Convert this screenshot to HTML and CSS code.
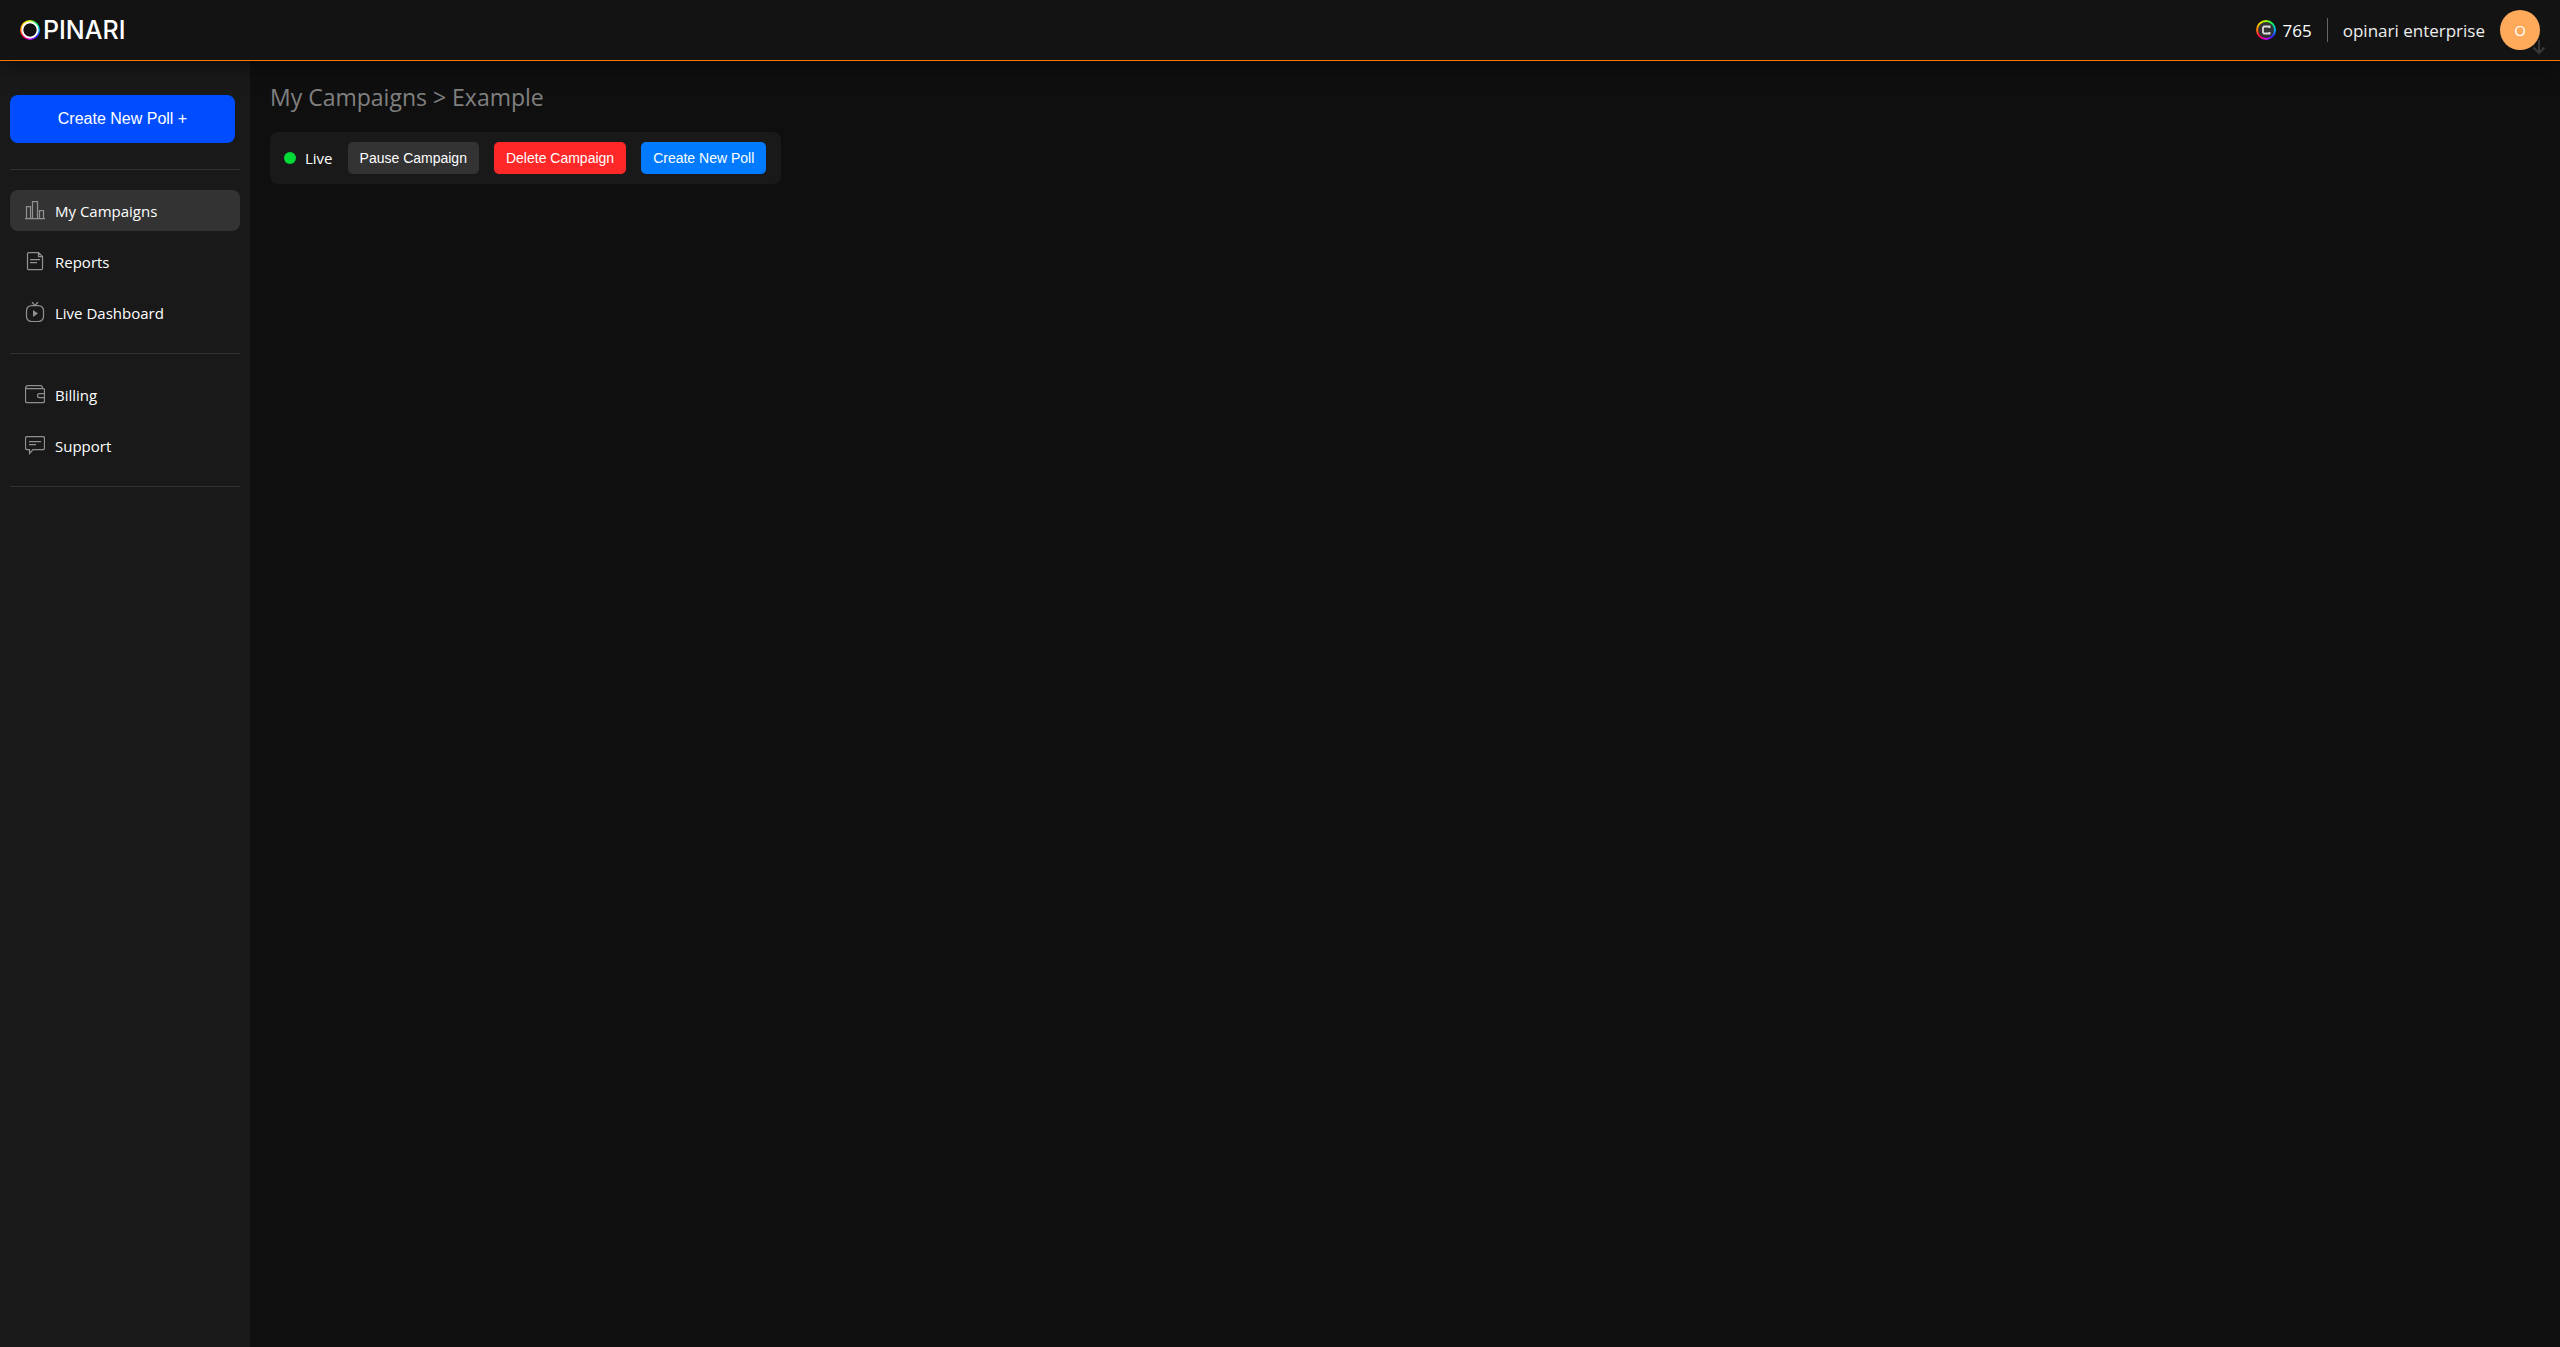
FILE: index.html
```html
<!DOCTYPE html>
<html lang="en">
<head>
    <meta charset="UTF-8">
    <meta name="viewport" content="width=device-width, initial-scale=1.0">
    <title>Opinari</title>
    <link rel="stylesheet" href="styles.css">
</head>
<body>
    <header class="header">
        <a class="logo" href="#" aria-label="Opinari"><span class="logo-ring"></span><span>PINARI</span></a>
        <div class="account">
            <div class="credits">
                <span class="coin">
                    <svg width="16" height="16" viewBox="0 0 16 16" fill="none" stroke="#ddd" stroke-width="1.8">
                        <path d="M11.500 6V4.500H6L5 5.500V10.500L6 11.500H11.500V10" />
                    </svg>
                </span>
                <span>765</span>
            </div>
            <div class="account-line"></div>
            <span class="account-name">opinari enterprise</span>
            <button class="avatar" type="button">O
                <svg class="avatar-arrow" width="14" height="16" viewBox="0 0 14 16" fill="none" stroke="#383838" stroke-width="2">
                    <path d="M7 1V14M1.500 8.500L7 14L12.500 8.500" />
                </svg>
            </button>
        </div>
    </header>

    <div class="layout">
        <aside class="sidebar">
            <button class="create-poll" type="button">Create New Poll +</button>
            <hr>
            <nav class="menu">
                <a class="menu-item active" href="#">
                    <svg class="icon" viewBox="0 0 20 20">
                        <path d="M0 18.500H20M1.500 18V6.500H5.500V18M7.500 18V1.500H12.500V18M14.500 18V10.500H18.500V18" />
                    </svg>
                    My Campaigns
                </a>
                <a class="menu-item" href="#">
                    <svg class="icon" viewBox="0 0 20 20">
                        <path d="M3.500 1.500H13.500L17.500 5.500V17.500Q17.500 18.500 16.500 18.500H3.500Q2.500 18.500 2.500 17.500V2.500Q2.500 1.500 3.500 1.500ZM13.500 1.500V5.500H17.500M5 8.500H15M5 11.500H12" />
                    </svg>
                    Reports
                </a>
                <a class="menu-item" href="#">
                    <svg class="icon" viewBox="0 0 20 20">
                        <rect x="1.500" y="3.500" width="17" height="16" rx="5" />
                        <path d="M7 0L10 3.500L13 0" />
                        <path class="filled" d="M8 8V15L13 11.500Z" />
                    </svg>
                    Live Dashboard
                </a>
            </nav>
            <hr>
            <nav class="menu">
                <a class="menu-item" href="#">
                    <svg class="icon" viewBox="0 0 20 20">
                        <path d="M.5 4.500V17Q.5 18.500 2 18.500H18Q19.500 18.500 19.500 17V6Q19.500 4.500 18 4.500H.5ZM.5 4.500Q.5 1.500 3 1.500H15.500Q17.500 1.500 17.500 4.500M19.500 9.500H14.500Q12.500 9.500 12.500 11.500T14.500 13.500H19.500" />
                    </svg>
                    Billing
                </a>
                <a class="menu-item" href="#">
                    <svg class="icon" viewBox="0 0 20 20">
                        <path d="M2 1.500H18Q19.500 1.500 19.500 3V13Q19.500 14.500 18 14.500H8L4.500 18.500V14.500H2Q.5 14.500 .5 13V3Q.5 1.500 2 1.500ZM4 6.500H16M4 9.500H11" />
                    </svg>
                    Support
                </a>
            </nav>
            <hr>
        </aside>

        <main class="content">
            <h1>My Campaigns &gt; Example</h1>
            <div class="toolbar">
                <div class="status"><span class="status-dot"></span>Live</div>
                <button class="button" type="button">Pause Campaign</button>
                <button class="button button-delete" type="button">Delete Campaign</button>
                <button class="button button-create" type="button">Create New Poll</button>
            </div>
        </main>
    </div>
</body>
</html>
```
FILE: styles.css
```css
* {
    box-sizing: border-box;
}
body {
    font-family: "Segoe UI", "Open Sans", sans-serif;
    font-size: 15px;
    margin: 0;
    min-height: 100vh;
    display: flex;
    flex-direction: column;
    background-color: #0f0f0f;
    color: white;
}
button {
    font-family: Arial, "Liberation Sans", sans-serif;
    border: none;
    color: white;
    cursor: pointer;
}
a {
    color: white;
    text-decoration: none;
}

/* Header */
.header {
    position: relative;
    display: flex;
    justify-content: space-between;
    align-items: center;
    height: 61px;
    padding: 0 20px;
    background-color: #131313;
    border-bottom: 1px solid #ff7300;
    box-shadow: 0 4px 20px rgba(0, 0, 0, 0.5);
}
.logo {
    display: flex;
    align-items: center;
    gap: 3px;
    font-family: Inter, sans-serif;
    font-size: 25px;
    font-weight: 500;
    line-height: 24px;
}
.logo-ring {
    width: 20px;
    height: 20px;
    border-radius: 50%;
    background: radial-gradient(circle closest-side, #131313 62%, white 70%, white 80%, transparent 90%),
        conic-gradient(#c8ff00, #00ff60, #00b0ff, #3020ff, #d000ff, #ff0050, #ff7000, #ffe000, #c8ff00);
}
.account {
    display: flex;
    align-items: center;
    gap: 15px;
    font-size: 17px;
}
.credits {
    display: flex;
    align-items: center;
    gap: 7px;
}
.coin {
    display: flex;
    padding: 2px;
    border-radius: 50%;
    background: conic-gradient(#a0ff00, #00ff60, #00b0ff, #3020ff, #d000ff, #ff0050, #ff7000, #ffe000, #a0ff00);
}
.coin svg {
    border-radius: 50%;
    background-color: #333;
}
.account-line {
    width: 1px;
    height: 24px;
    background-color: #666;
}
.account-name {
    color: #eee;
}
.avatar {
    position: relative;
    width: 40px;
    height: 40px;
    padding: 0;
    border-radius: 50%;
    background-color: #ffa95a;
    font-family: "Segoe UI", "Open Sans", sans-serif;
    font-size: 15px;
}
.avatar-arrow {
    position: absolute;
    right: -6px;
    bottom: -5px;
}

/* Sidebar */
.layout {
    flex: 1;
    display: flex;
}
.sidebar {
    width: 250px;
    padding: 34px 10px 20px;
    background-color: #191919;
}
.create-poll {
    display: block;
    width: 225px;
    height: 48px;
    border-radius: 8px;
    background-color: #004dff;
    font-size: 16px;
}
hr {
    height: 1px;
    margin: 20px 0;
    border: none;
    background-color: #333;
}
.create-poll + hr {
    margin-top: 26px;
}
.menu {
    display: flex;
    flex-direction: column;
    gap: 10px;
}
.menu-item {
    display: flex;
    align-items: center;
    gap: 10px;
    height: 41px;
    padding: 0 15px;
    border-radius: 8px;
}
.active {
    background-color: #333;
}
.icon {
    width: 20px;
    height: 20px;
    margin-bottom: 1px;
    fill: none;
    stroke: #909090;
    stroke-width: 1.25;
}
.icon .filled {
    fill: #909090;
    stroke: none;
}

/* Content */
.content {
    flex: 1;
    padding: 20px;
}
h1 {
    margin: 0 0 19px;
    font-size: 23px;
    font-weight: 400;
    line-height: 32px;
    color: #808080;
}
.toolbar {
    display: inline-flex;
    align-items: center;
    gap: 15px;
    padding: 10px 15px 10px 14px;
    border-radius: 8px;
    background-color: #191919;
}
.status {
    display: flex;
    align-items: center;
    gap: 9px;
}
.status-dot {
    width: 12px;
    height: 12px;
    border-radius: 50%;
    background-color: #00d936;
}
.button {
    height: 32px;
    padding: 0 12px;
    border-radius: 5px;
    background-color: #333;
    font-size: 14px;
}
.button-delete {
    background-color: #ff2828;
}
.button-create {
    background-color: #007bff;
}
```
